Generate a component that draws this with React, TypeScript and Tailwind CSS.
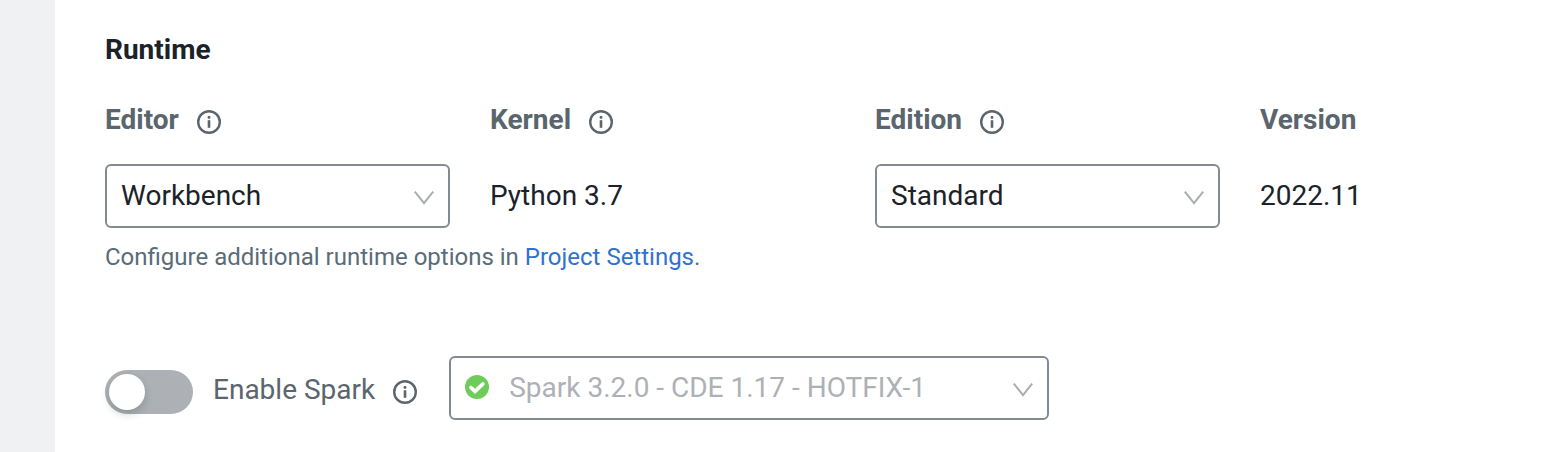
import React from "react";

function Info() {
  return (
    <svg width="24" height="24" viewBox="0 0 24 24" fill="none" className="shrink-0">
      <circle cx="12" cy="12" r="10.8" stroke="#5a656d" strokeWidth="2.4" />
      <rect x="10.7" y="10.2" width="2.6" height="7.6" fill="#5a656d" />
      <rect x="10.6" y="6.1" width="2.8" height="2.6" rx="0.8" fill="#5a656d" />
    </svg>
  );
}

function Chevron() {
  return (
    <svg width="20" height="14" viewBox="0 0 20 14" fill="none" className="mt-1 shrink-0">
      <path d="M0.8 0.6L10 12.2L19.2 0.6" stroke="#a9adb2" strokeWidth="2" />
    </svg>
  );
}

function Heading({ text, info = true }: { text: string; info?: boolean }) {
  return (
    <div className="flex h-8 items-center gap-[18px] text-[28px] font-bold text-[#5a656d]">
      <span>{text}</span>
      {info && <span className="mt-1"><Info /></span>}
    </div>
  );
}

function Select({ text }: { text: string }) {
  return (
    <div className="flex h-16 w-[345px] items-center justify-between rounded-[6px] border-2 border-[#838a90] px-[14px] text-[28px] text-[#1b2229]">
      <span>{text}</span>
      <Chevron />
    </div>
  );
}

export default function App() {
  return (
    <div className="flex h-[452px] w-[1558px] overflow-hidden bg-white font-[Roboto,sans-serif]">
      <aside className="w-[55px] shrink-0 bg-[#f0f1f3]" />
      <main className="pl-[50px] pt-[34px]">
        <h2 className="h-8 text-[28px] leading-8 font-bold text-[#1b2229]">Runtime</h2>
        <div className="mt-[38px] grid grid-cols-[385px_385px_385px_200px]">
          <Heading text="Editor" />
          <Heading text="Kernel" />
          <Heading text="Edition" />
          <Heading text="Version" info={false} />
        </div>
        <div className="mt-7 grid grid-cols-[385px_385px_385px_200px] items-center text-[28px] text-[#1b2229]">
          <Select text="Workbench" />
          <span>Python 3.7</span>
          <Select text="Standard" />
          <span>2022.11</span>
        </div>
        <p className="mt-[13px] h-8 text-[24px] leading-8 text-[#5a6b79]">
          Configure additional runtime options in <a className="text-[#2f72cf]">Project Settings</a>.
        </p>
        <div className="mt-[83px] flex h-16 items-center">
          <div className="mt-[8px] flex h-11 w-[88px] items-center rounded-full bg-[#adb1b6] p-1">
            <div className="size-9 rounded-full bg-white shadow-[0_4px_8px_rgba(0,35,11,0.2)]" />
          </div>
          <span className="mt-1 ml-5 text-[28px] text-[#5a656d]">Enable Spark</span>
          <span className="mt-2 ml-[18px]"><Info /></span>
          <div className="ml-8 flex h-16 w-[600px] items-center rounded-[6px] border-2 border-[#838a90] px-[14px] text-[28px] text-[#adb1b6]">
            <svg width="24" height="24" viewBox="0 0 24 24" fill="none" className="mb-0.5">
              <circle cx="12" cy="12" r="12" fill="#70cc5a" />
              <path d="M5.9 12.5L10 16.4L17.9 8.9" stroke="white" strokeWidth="3.6" strokeLinecap="round" />
            </svg>
            <span className="ml-5 flex-1">Spark 3.2.0 - CDE 1.17 - HOTFIX-1</span>
            <Chevron />
          </div>
        </div>
      </main>
    </div>
  );
}
